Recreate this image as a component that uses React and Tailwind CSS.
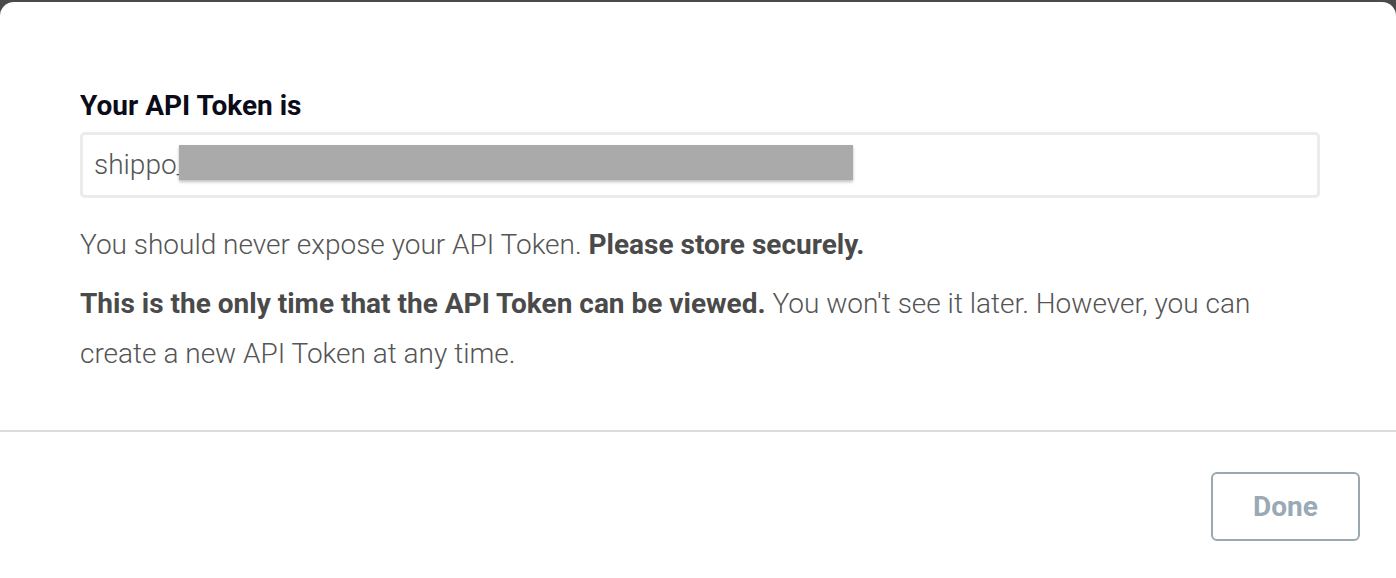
export default function App() {
  return (
    <div className="h-[578px] overflow-hidden bg-[#4a4a4a] pt-[2px] font-['Roboto','Liberation_Sans',sans-serif]">
      <div className="h-[590px] bg-white rounded-[14px] flex flex-col">
        <section className="pl-[80px] pr-[76px] pt-[88px] pb-[51px]">
          <h2 className="text-[28px] leading-[32px] font-bold text-[#0b0b19]">Your API Token is</h2>
          <div className="mt-[10px] h-[66px] border-[3px] border-[#ebebeb] rounded-[5px] flex items-center pl-[11px]">
            <span className="text-[28px] font-light text-[#555]">shippo_</span>
            <span className="-ml-[10px] -mt-[5px] h-[35px] w-[674px] bg-[#aaaaaa] shadow-[0_2px_3px_rgba(0,0,0,0.25)]" />
          </div>
          <p className="mt-[22px] text-[28px] leading-[50px] font-light text-[#555]">
            You should never expose your API Token. <strong className="font-bold text-[#4a4a4a]">Please store securely.</strong>
          </p>
          <p className="mt-[9px] text-[28px] leading-[50px] font-light text-[#555]">
            <strong className="font-bold text-[#4a4a4a]">This is the only time that the API Token can be viewed.</strong> You won't see it later. However, you can create a new API Token at any time.
          </p>
        </section>
        <div className="h-[2px] bg-[#dcdce0]" />
        <footer className="flex justify-end pt-[40px] pr-[36px]">
          <button className="w-[149px] h-[69px] border-2 border-[#9aa8b0] rounded-[6px] text-[28px] font-bold text-[#9aa9b4] bg-white">
            Done
          </button>
        </footer>
      </div>
    </div>
  );
}
